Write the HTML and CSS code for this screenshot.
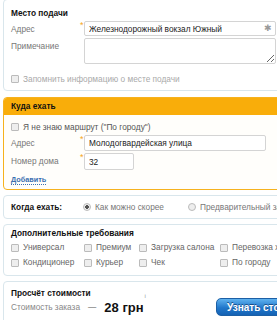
FILE: index.html
```html
<!DOCTYPE html>
<html lang="ru">
<head>
    <meta charset="UTF-8">
    <title>Заказ такси</title>
    <link rel="stylesheet" href="styles.css">
</head>
<body>
    <div class="form">
        <div class="box first">
            <div class="title">Место подачи</div>
            <div class="row">
                <span class="label">Адрес</span>
                <span class="star">*</span>
                <div class="field wide">
                    <input class="input" type="text" value="Железнодорожный вокзал Южный">
                    <span class="mark">✱</span>
                </div>
            </div>
            <div class="row">
                <span class="label">Примечание</span>
                <span class="star"></span>
                <textarea class="input note"></textarea>
            </div>
            <label class="check muted"><span class="box-mark"></span>Запомнить информацию о месте подачи</label>
        </div>

        <div class="box orange">
            <div class="head">Куда ехать</div>
            <div class="body">
                <label class="check"><span class="box-mark"></span>Я не знаю маршрут ("По городу")</label>
                <div class="row">
                    <span class="label">Адрес</span>
                    <span class="star">*</span>
                    <input class="input street" type="text" value="Молодогвардейская улица">
                </div>
                <div class="row">
                    <span class="label">Номер дома</span>
                    <span class="star">*</span>
                    <input class="input house" type="text" value="32">
                </div>
                <a class="add" href="#">Добавить</a>
            </div>
        </div>

        <div class="box when">
            <span class="title inline">Когда ехать:</span>
            <label class="radio"><span class="dot on"></span>Как можно скорее</label>
            <label class="radio"><span class="dot"></span>Предварительный заказ</label>
        </div>

        <div class="box extras">
            <div class="title">Дополнительные требования</div>
            <div class="options">
                <label class="check"><span class="box-mark"></span>Универсал</label>
                <label class="check"><span class="box-mark"></span>Премиум</label>
                <label class="check"><span class="box-mark"></span>Загрузка салона</label>
                <label class="check"><span class="box-mark"></span>Перевозка животных</label>
                <label class="check"><span class="box-mark"></span>Кондиционер</label>
                <label class="check"><span class="box-mark"></span>Курьер</label>
                <label class="check"><span class="box-mark"></span>Чек</label>
                <label class="check"><span class="box-mark"></span>По городу</label>
            </div>
        </div>

        <div class="box price">
            <div class="title">Просчёт стоимости</div>
            <div class="cost">
                <span class="cost-label">Стоимость заказа</span>
                <span class="dash">—</span>
                <span class="sum">28 грн</span>
                <sup class="info">i</sup>
                <button class="btn">Узнать стоимость</button>
            </div>
        </div>
    </div>
</body>
</html>
```

FILE: styles.css
```css
body {
    margin: 0;
    font-family: "Liberation Sans", Arial, sans-serif;
    font-size: 8.3px;
    color: #333;
    background: #fff;
    overflow: hidden;
}
.form {
    width: 330px;
    margin-left: 3px;
}
.box {
    border: 1px solid #d9e6ec;
    border-radius: 4px;
    padding: 6px 8px 7px 7px;
    margin-bottom: 5px;
    white-space: nowrap;
}
.box.first {
    margin-top: -1px;
    padding-top: 7px;
    padding-bottom: 4px;
    margin-bottom: 6px;
}
.title {
    font-weight: bold;
    color: #111;
    line-height: 12px;
}
.row {
    display: flex;
    align-items: flex-start;
    margin-top: 2px;
}
.label {
    width: 69px;
    color: #777;
    line-height: 14px;
    padding-top: 1px;
}
.star {
    width: 4px;
    color: #f5a623;
    font-size: 9px;
    line-height: 8px;
}
.field {
    position: relative;
}
.input {
    box-sizing: border-box;
    border: 1px solid #d4d4d4;
    border-radius: 2px;
    height: 15px;
    padding: 0 4px;
    font-family: "Liberation Sans", Arial, sans-serif;
    font-size: 8.3px;
    color: #222;
    background: #fff;
    margin: 0;
}
.wide .input {
    width: 192px;
}
.mark {
    position: absolute;
    right: 4px;
    top: 2px;
    color: #999;
    font-size: 9px;
}
.note {
    width: 192px;
    height: 26px;
    resize: both;
}
.check {
    display: flex;
    align-items: center;
    line-height: 14px;
    color: #555;
    margin-top: 8px;
}
.check.muted {
    color: #aaa;
}
.box-mark {
    width: 6px;
    height: 6px;
    border: 1px solid #bbb;
    background: #eee;
    border-radius: 1px;
    margin-right: 4px;
}
.orange {
    border-color: #f6b21e;
    padding: 0;
    background: #fffefb;
}
.head {
    background: #f9ad0a;
    color: #111;
    font-weight: bold;
    line-height: 17px;
    padding-left: 7px;
    border-radius: 3px 3px 0 0;
}
.body {
    padding: 6px 8px 4px 7px;
}
.body .check {
    margin-top: 0;
    line-height: 12px;
}
.street {
    width: 182px;
    height: 16px;
}
.house {
    width: 50px;
    height: 17px;
}
.add {
    display: inline-block;
    margin-top: 5px;
    font-size: 7.3px;
    font-weight: bold;
    color: #3a6fb0;
    text-decoration: none;
    border-bottom: 1px dotted #3a6fb0;
    line-height: 9px;
}
.when {
    display: flex;
    align-items: center;
    padding-top: 5px;
    padding-bottom: 5px;
}
.title.inline {
    width: 72px;
}
.radio {
    display: flex;
    align-items: center;
    color: #777;
    margin-right: 24px;
    line-height: 12px;
}
.dot {
    width: 6px;
    height: 6px;
    border: 1px solid #bbb;
    border-radius: 50%;
    background: #eee;
    margin-right: 4px;
}
.dot.on {
    background: radial-gradient(circle, #555 40%, #eee 50%);
}
.extras {
    padding-top: 2px;
    padding-bottom: 5px;
}
.options {
    display: grid;
    grid-template-columns: 73px 55px 81px auto;
    margin-top: 1px;
}
.options .check {
    margin-top: 0;
    line-height: 15px;
    color: #666;
}
.price {
    padding-top: 5px;
    padding-bottom: 12px;
}
.cost {
    display: flex;
    align-items: center;
    height: 16px;
    margin-top: 0;
}
.cost-label {
    color: #888;
}
.dash {
    margin: 0 8px;
    color: #555;
}
.sum {
    font-size: 13px;
    font-weight: bold;
    color: #111;
}
.info {
    font-size: 6px;
    color: #999;
    align-self: flex-start;
    margin-top: -6px;
    margin-left: 1px;
}
.btn {
    margin-left: 70px;
    height: 18px;
    padding: 0 10px;
    border: 1px solid #1c5fa5;
    border-radius: 5px;
    background: linear-gradient(#5fb2ef, #2177cb 55%, #1462b4);
    color: #fff;
    font-family: "Liberation Sans", Arial, sans-serif;
    font-weight: bold;
    font-size: 10px;
    text-shadow: 0 -1px 0 #1a4f8a;
}
```
